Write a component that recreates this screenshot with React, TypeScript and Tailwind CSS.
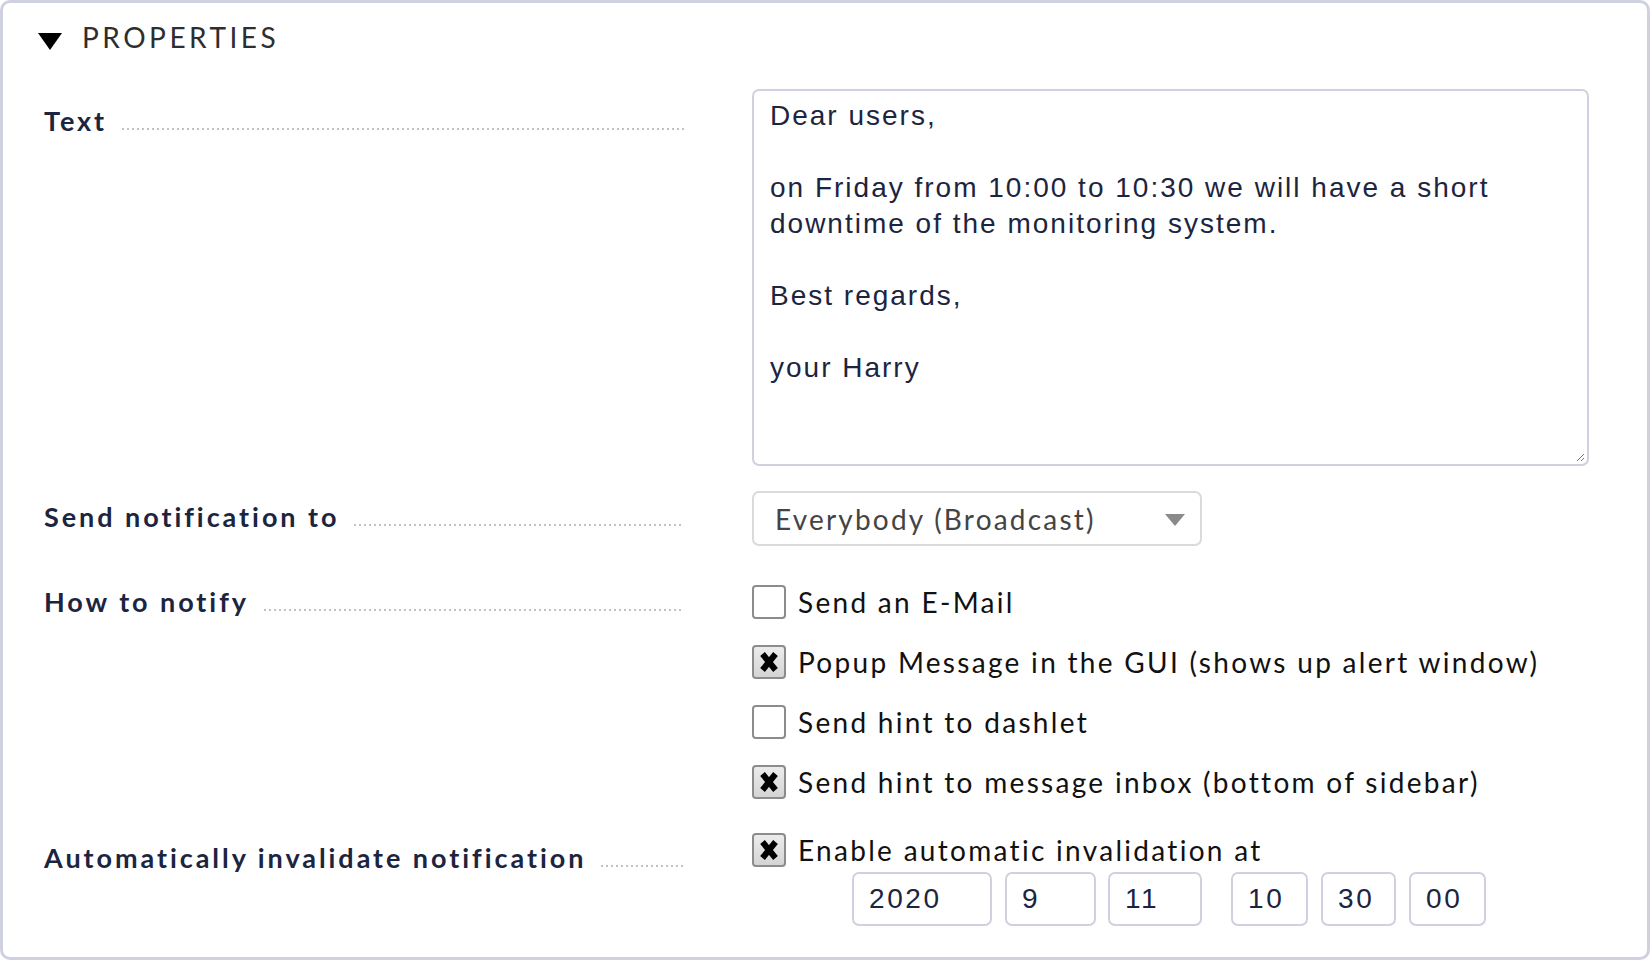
import React from "react";

const Leader = ({ mt = "mt-[25px]" }: { mt?: string }) => (
  <div
    className={`flex-1 ml-[15px] h-[2px] ${mt} bg-[linear-gradient(to_right,#c2c2c2_2px,transparent_2px)] bg-[length:5px_2px] bg-repeat-x`}
  />
);

const Label = ({ text }: { text: string }) => (
  <div className="flex items-start h-[36px]">
    <span className="font-['Lato'] font-bold text-[27px] leading-[36px] tracking-[2.95px] text-[#1c2540] whitespace-nowrap">
      {text}
    </span>
    <Leader />
  </div>
);

const Check = ({ checked, label }: { checked: boolean; label: string }) => (
  <div className="flex items-center h-[40px]">
    <div
      className={`w-[34px] h-[34px] rounded-[4px] border-2 border-[#8c8c8c] flex items-center justify-center shrink-0 ${
        checked ? "bg-[linear-gradient(#ececec,#d4d4d4)]" : "bg-white"
      }`}
    >
      {checked && (
        <svg width="22" height="24" viewBox="0 0 22 24">
          <path d="M4.5 4 L17.5 20 M17.5 4 L4.5 20" stroke="#000" strokeWidth="6" strokeLinecap="butt" />
        </svg>
      )}
    </div>
    <span className="ml-[12px] font-['Lato'] text-[28px] leading-[36px] tracking-[2.3px] text-[#111] whitespace-nowrap">
      {label}
    </span>
  </div>
);

const DateBox = ({ value, w }: { value: string; w: string }) => (
  <div
    className={`${w} h-[54px] rounded-[7px] border-2 border-[#cfd1e0] flex items-center pl-[15px] font-['Liberation_Sans'] text-[28px] text-[#1c2540] tracking-[2.6px]`}
  >
    {value}
  </div>
);

export default function App() {
  return (
    <div className="w-[1650px] h-[960px] bg-white border-[3px] border-[#cfd1e0] rounded-[10px] overflow-hidden">
      {/* header */}
      <div className="flex items-center h-[40px] mt-[14px] ml-[35px]">
        <svg width="24" height="17" viewBox="0 0 24 17" className="mt-[8px]">
          <path d="M0 0 H24 L12 17 Z" fill="#000" />
        </svg>
        <span className="ml-[20px] font-['Lato'] text-[28px] tracking-[3.5px] text-[#2e2e2e] leading-[40px]">
          PROPERTIES
        </span>
      </div>

      <div className="flex flex-col mt-[32px] ml-[41px]">
        {/* Text row */}
        <div className="flex">
          <div className="w-[640px] pt-[14px]">
            <Label text="Text" />
          </div>
          <div className="ml-[68px] w-[837px] h-[377px] rounded-[7px] border-2 border-[#cfd1e0] pl-[16px] pt-[7px] font-['Liberation_Sans'] text-[28px] leading-[36px] tracking-[2px] text-[#1c2540] relative">
            <div>Dear users,</div>
            <div>&nbsp;</div>
            <div>on Friday from 10:00 to 10:30 we will have a short</div>
            <div>downtime of the monitoring system.</div>
            <div>&nbsp;</div>
            <div>Best regards,</div>
            <div>&nbsp;</div>
            <div>your Harry</div>
            <svg width="10" height="10" viewBox="0 0 10 10" className="absolute right-[2px] bottom-[2px]">
              <path d="M9 2 L2 9 M9 6 L6 9" stroke="#777" strokeWidth="1" />
            </svg>
          </div>
        </div>

        {/* Send notification to */}
        <div className="flex mt-[25px]">
          <div className="w-[640px] pt-[8px]">
            <Label text="Send notification to" />
          </div>
          <div className="ml-[68px] w-[450px] h-[55px] rounded-[7px] border-2 border-[#dadada] flex items-center pl-[21px] pr-[15px]">
            <span className="flex-1 font-['Lato'] text-[28px] tracking-[2.2px] text-[#444]">
              Everybody (Broadcast)
            </span>
            <svg width="20" height="12" viewBox="0 0 20 12" className="mt-[2px]">
              <path d="M0 0 H20 L10 12 Z" fill="#8a8a8a" />
            </svg>
          </div>
        </div>

        {/* How to notify */}
        <div className="flex mt-[36px]">
          <div className="w-[640px] pt-[2px]">
            <Label text="How to notify" />
          </div>
          <div className="ml-[68px] flex flex-col gap-[20px]">
            <Check checked={false} label="Send an E-Mail" />
            <Check checked={true} label="Popup Message in the GUI (shows up alert window)" />
            <Check checked={false} label="Send hint to dashlet" />
            <Check checked={true} label="Send hint to message inbox (bottom of sidebar)" />
          </div>
        </div>

        {/* Automatically invalidate */}
        <div className="flex mt-[28px]">
          <div className="w-[640px] pt-[10px]">
            <Label text="Automatically invalidate notification" />
          </div>
          <div className="ml-[68px] flex flex-col">
            <Check checked={true} label="Enable automatic invalidation at" />
            <div className="flex mt-[2px] ml-[100px]">
              <DateBox value="2020" w="w-[140px]" />
              <DateBox value="9" w="w-[91px] ml-[13px]" />
              <DateBox value="11" w="w-[94px] ml-[12px]" />
              <DateBox value="10" w="w-[77px] ml-[29px]" />
              <DateBox value="30" w="w-[75px] ml-[13px]" />
              <DateBox value="00" w="w-[77px] ml-[13px]" />
            </div>
          </div>
        </div>
      </div>
    </div>
  );
}
